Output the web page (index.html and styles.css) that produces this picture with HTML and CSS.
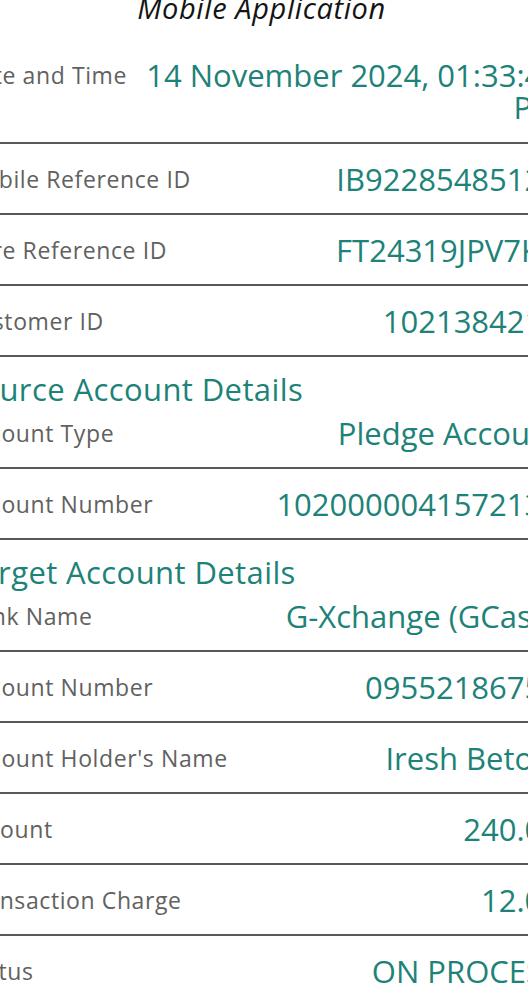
FILE: index.html
```html
<!DOCTYPE html>
<html lang="en">
<head>
<meta charset="utf-8">
<title>Transaction Receipt</title>
<link rel="stylesheet" href="styles.css">
</head>
<body>
<main class="receipt">
  <div class="title">Mobile Application</div>

  <div class="row row-date">
    <span class="label">Date and Time</span>
    <span class="value value-date">14 November 2024, 01:33:45<br>PM</span>
  </div>

  <div class="row">
    <span class="label">Mobile Reference ID</span>
    <span class="value">IB92285485123</span>
  </div>
  <div class="row">
    <span class="label">Core Reference ID</span>
    <span class="value">FT24319JPV7KB</span>
  </div>
  <div class="row">
    <span class="label">Customer ID</span>
    <span class="value">1021384212</span>
  </div>

  <section class="section">
    <h2 class="section-title">Source Account Details</h2>
    <div class="row row-first">
      <span class="label">Account Type</span>
      <span class="value">Pledge Account</span>
    </div>
  </section>
  <div class="row">
    <span class="label">Account Number</span>
    <span class="value">1020000041572131</span>
  </div>

  <section class="section">
    <h2 class="section-title">Target Account Details</h2>
    <div class="row row-first">
      <span class="label">Bank Name</span>
      <span class="value">G-Xchange (GCash)</span>
    </div>
  </section>
  <div class="row">
    <span class="label">Account Number</span>
    <span class="value">09552186750</span>
  </div>
  <div class="row">
    <span class="label">Account Holder's Name</span>
    <span class="value">Iresh Betoni</span>
  </div>
  <div class="row">
    <span class="label">Amount</span>
    <span class="value">240.00</span>
  </div>
  <div class="row">
    <span class="label">Transaction Charge</span>
    <span class="value">12.00</span>
  </div>
  <div class="row">
    <span class="label">Status</span>
    <span class="value">ON PROCESS</span>
  </div>
</main>
</body>
</html>
```

FILE: styles.css
```css
html, body {
  margin: 0;
  padding: 0;
  background: #ffffff;
  overflow: hidden;
}

body {
  width: 528px;
  height: 991px;
}

.receipt {
  width: 597px;
  margin-left: -37px;
  font-family: "Open Sans", "Liberation Sans", sans-serif;
}

.title {
  height: 41px;
  font-size: 29px;
  line-height: 28px;
  margin-top: -6px;
  letter-spacing: 0.6px;
  font-style: italic;
  color: #141414;
  text-align: center;
}

.row {
  display: flex;
  justify-content: space-between;
  align-items: center;
  height: 69px;
  border-bottom: 2px solid #585858;
  box-sizing: content-box;
}

.row-date {
  height: auto;
  align-items: flex-start;
  padding: 24px 0 19px;
}

.label {
  font-size: 23px;
  line-height: 32px;
  letter-spacing: 0.6px;
  color: #616161;
  white-space: nowrap;
}

.value {
  font-size: 31px;
  line-height: 32px;
  color: #1d8278;
  text-align: right;
  white-space: nowrap;
}

.section {
  margin: 0;
  padding-top: 15px;
}

.section-title {
  margin: 0;
  font-weight: normal;
  font-size: 31px;
  line-height: 34px;
  letter-spacing: 0.4px;
  color: #1d8278;
}

.row-first {
  height: 32px;
  padding: 11px 0 18px;
}
```
